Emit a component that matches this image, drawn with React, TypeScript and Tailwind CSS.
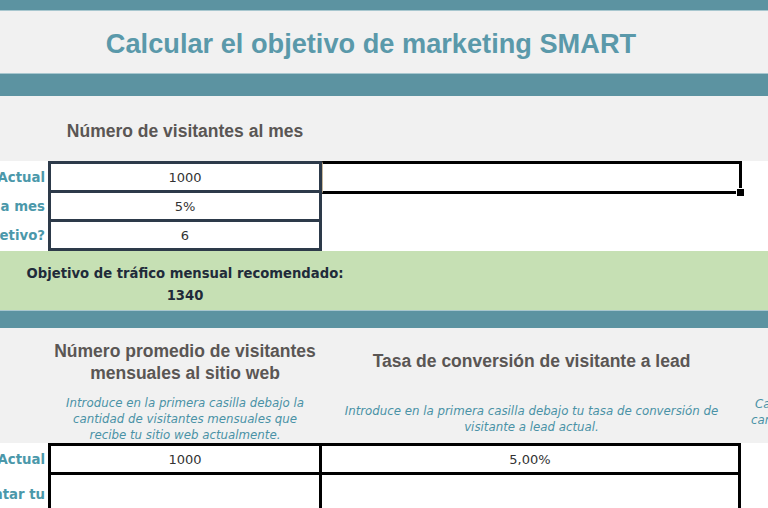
import React from "react";

const Label = ({ children, h }: { children: React.ReactNode; h: string }) => (
  <div className={`${h} flex items-center justify-end overflow-hidden whitespace-nowrap pr-[3px] pt-[1px] text-[13.3px] font-bold text-[#4b98aa] font-['DejaVu_Sans',sans-serif]`}>
    {children}
  </div>
);

export default function App() {
  return (
    <div className="w-[768px] h-[508px] overflow-hidden bg-white font-['Liberation_Sans',Arial,sans-serif]">
      {/* top teal bar */}
      <div className="h-[11px] bg-[#5c93a1] border-b border-[#a8c7cf]" />
      {/* title */}
      <div className="h-[62px] bg-[#f1f1f1] flex items-center justify-center pr-[26px] pt-[3px]">
        <h1 className="text-[27.2px] font-bold text-[#5a99aa] whitespace-nowrap leading-none">
          Calcular el objetivo de marketing SMART
        </h1>
      </div>
      <div className="h-[23px] bg-[#5c93a1] border-t border-[#a8c7cf]" />
      {/* heading 1 */}
      <div className="h-[65px] bg-[#f1f1f1] flex">
        <div className="w-[48px]" />
        <div className="w-[274px] flex items-center justify-center pt-[6px] text-[17.5px] font-bold text-[#5a5654] whitespace-nowrap">
          Número de visitantes al mes
        </div>
      </div>
      {/* table 1 */}
      <div className="h-[90px] flex bg-white">
        <div className="w-[48px] pt-[3px] flex flex-col gap-[3px]">
          <Label h="h-[26px]">Tráfico Actual</Label>
          <Label h="h-[26px]">Crecimiento mes a mes</Label>
          <Label h="h-[26px]">¿En cuántos meses lograr el objetivo?</Label>
        </div>
        <div className="w-[274px] bg-[#2d3a4a] p-[3px] flex flex-col gap-[3px] text-[13px] text-[#333] font-['DejaVu_Sans',sans-serif]">
          <div className="h-[26px] bg-white flex items-center justify-center pt-[1px]">1000</div>
          <div className="h-[26px] bg-white flex items-center justify-center pt-[1px]">5%</div>
          <div className="h-[26px] bg-white flex items-center justify-center pt-[1px]">6</div>
        </div>
        <div className="flex-1">
          <div className="relative w-[420px] h-[33px] border-l border-l-[#c8b89c] border-t-[3px] border-r-[3px] border-b-[3px] border-black">
            <div className="absolute right-[-6px] bottom-[-6px] w-[9px] h-[9px] bg-black border border-white" />
          </div>
        </div>
      </div>
      {/* green result */}
      <div className="h-[59px] bg-[#c6e0b4] flex">
        <div className="w-[48px]" />
        <div className="w-[274px] pt-[12px] flex flex-col items-center leading-[22px] text-[13.2px] font-bold text-[#1f2b3a] font-['DejaVu_Sans',sans-serif] whitespace-nowrap">
          <div>Objetivo de tráfico mensual recomendado:</div>
          <div>1340</div>
        </div>
      </div>
      <div className="h-[18px] bg-[#5c93a1] border-t border-[#a8c7cf]" />
      {/* section 2 header */}
      <div className="h-[115px] bg-[#f1f1f1] flex flex-col">
        <div className="h-[66px] flex">
          <div className="w-[48px]" />
          <div className="w-[274px] flex flex-col items-center justify-center pt-[1px] text-[17.5px] font-bold text-[#5a5654] leading-[22px] text-center">
            <div>Número promedio de visitantes</div>
            <div>mensuales al sitio web</div>
          </div>
          <div className="w-[419px] flex items-center justify-center pt-[1px] text-[17.5px] font-bold text-[#5a5654] whitespace-nowrap">
            Tasa de conversión de visitante a lead
          </div>
        </div>
        <div className="h-[49px] flex text-[11.8px] italic text-[#4a92a6] leading-[16px] font-['DejaVu_Sans',sans-serif] whitespace-nowrap">
          <div className="w-[48px]" />
          <div className="w-[274px] flex flex-col items-center justify-center">
            <div>Introduce en la primera casilla debajo la</div>
            <div>cantidad de visitantes mensuales que</div>
            <div>recibe tu sitio web actualmente.</div>
          </div>
          <div className="w-[419px] flex flex-col items-center justify-center">
            <div>Introduce en la primera casilla debajo tu tasa de conversión de</div>
            <div>visitante a lead actual.</div>
          </div>
          <div className="flex-1 overflow-hidden flex flex-col justify-center pb-[14px]">
            <div className="pl-[14px]">Calcula la</div>
            <div className="pl-[10px]">cantidad de</div>
          </div>
        </div>
      </div>
      {/* table 2 */}
      <div className="flex bg-white">
        <div className="w-[48px] pt-[3px] flex flex-col gap-[3px]">
          <Label h="h-[26px]">Actual</Label>
          <Label h="h-[38px]">Aumentar tu</Label>
        </div>
        <div className="w-[693px] bg-black p-[3px] grid grid-cols-[268px_416px] gap-[3px] text-[13px] text-[#333] font-['DejaVu_Sans',sans-serif]">
          <div className="h-[26px] bg-white flex items-center justify-center pt-[2px]">1000</div>
          <div className="h-[26px] bg-white flex items-center justify-center pt-[2px]">5,00%</div>
          <div className="h-[40px] bg-white" />
          <div className="h-[40px] bg-white" />
        </div>
      </div>
    </div>
  );
}
